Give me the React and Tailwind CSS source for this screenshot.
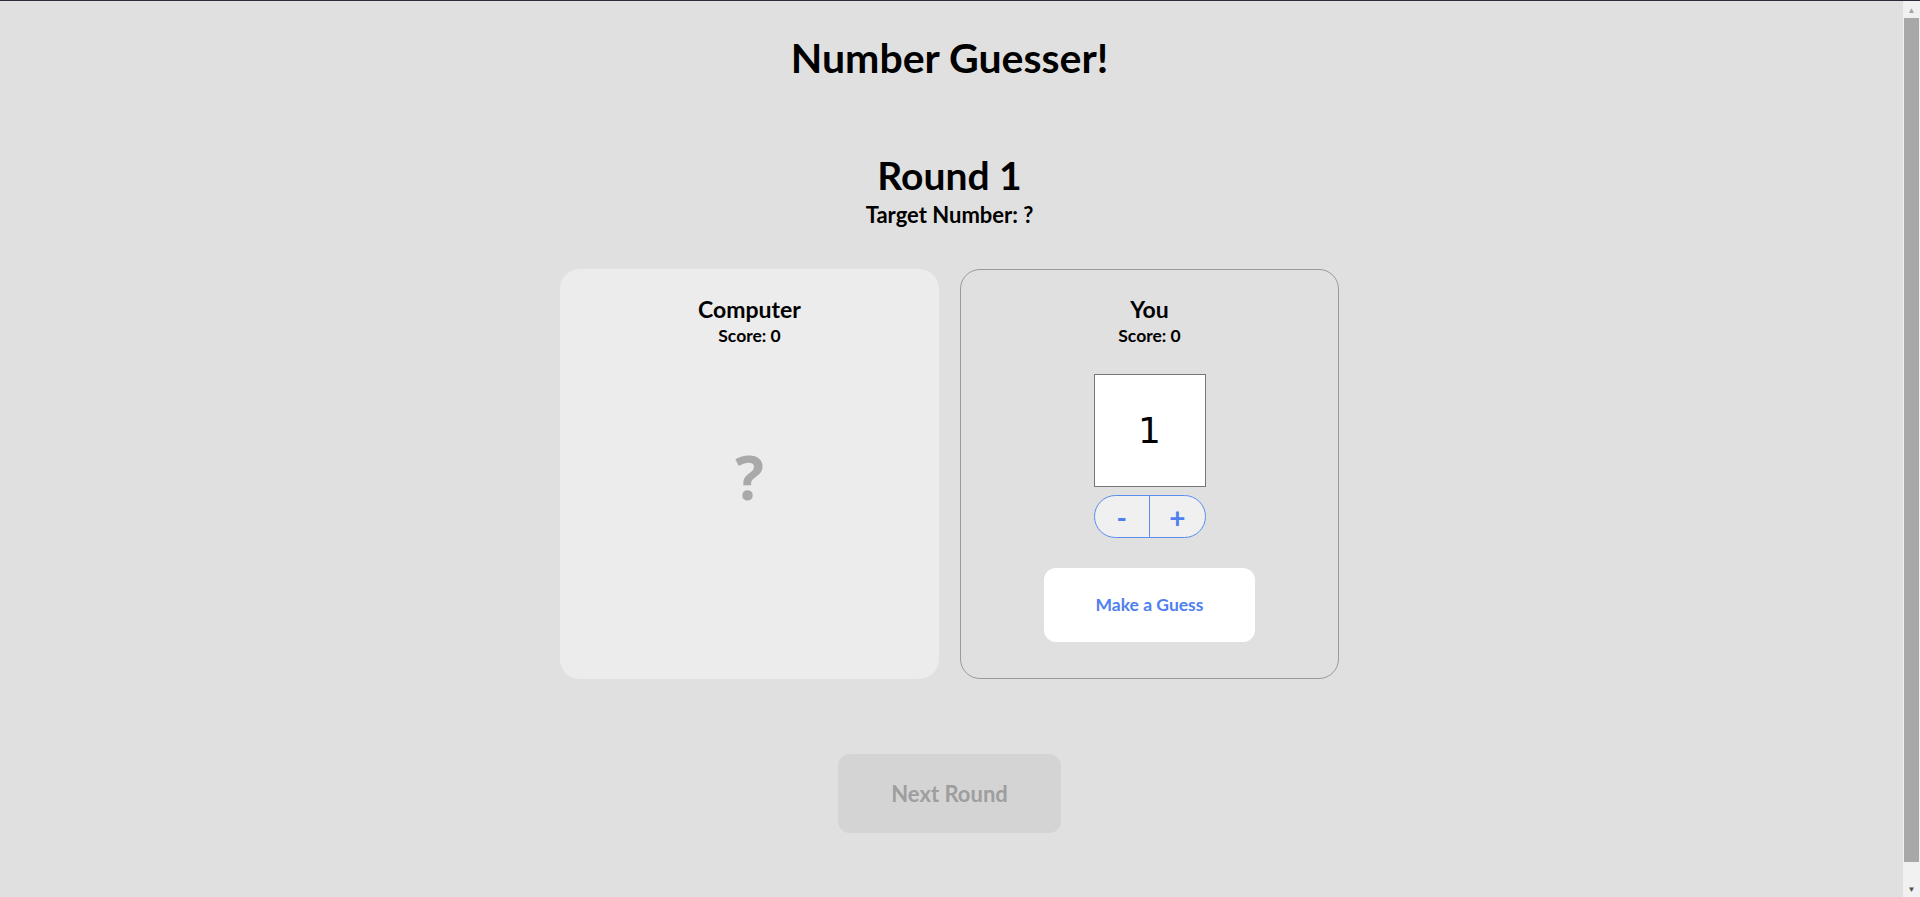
import { useState } from 'react';

export default function App() {
  const [guess, setGuess] = useState(1);

  return (
    <div className="h-[897px] flex bg-[#e0e0e0] border-t border-[#2b2b3b] overflow-hidden">
      <div className="flex-1 min-h-[920px] pr-[4px] font-['Lato',sans-serif] text-black flex flex-col items-center pb-[86px]">
        <h1 className="mt-[33px] text-[41px] leading-[48px] font-bold">Number Guesser!</h1>

        <h2 className="mt-[71px] text-[39px] leading-[44px] font-bold">Round 1</h2>
        <p className="mt-[6px] text-[22px] leading-[24px] font-bold">Target Number: ?</p>

        <div className="mt-[42px] flex gap-[21px]">
          {/* computer */}
          <div className="w-[379px] h-[410px] rounded-[20px] bg-[#ececec] flex flex-col items-center pt-[27px]">
            <h3 className="text-[23px] leading-[26px] font-bold">Computer</h3>
            <p className="mt-[4px] text-[17.5px] leading-[20px] font-bold">Score: 0</p>
            <div className="mt-[95px] text-[60px] leading-[72px] font-bold text-[#a9a9a9] font-['Open_Sans',sans-serif]">?</div>
          </div>

          {/* player */}
          <div className="w-[379px] h-[410px] rounded-[20px] border border-[#9a9a9a] flex flex-col items-center pt-[26px]">
            <h3 className="text-[23px] leading-[26px] font-bold">You</h3>
            <p className="mt-[4px] text-[17.5px] leading-[20px] font-bold">Score: 0</p>
            <div className="mt-[28px] w-[112px] h-[113px] bg-white border border-[#767676] flex items-center justify-center font-['DejaVu_Sans',sans-serif] text-[36px]">
              {guess}
            </div>
            <div className="mt-[8px] w-[112px] h-[43px] rounded-full border border-[#5b8def] bg-[#f0f0f0] flex overflow-hidden text-[#4f7ff0] font-bold text-[28px]">
              <button onClick={() => setGuess(Math.max(0, guess - 1))} className="flex-1 flex items-center justify-center border-r border-[#5b8def]">-</button>
              <button onClick={() => setGuess(Math.min(10, guess + 1))} className="flex-1 flex items-center justify-center">+</button>
            </div>
            <button className="mt-[30px] w-[211px] h-[74px] rounded-[12px] bg-white text-[17.5px] font-bold text-[#4f7ff0]">Make a Guess</button>
          </div>
        </div>

        <button disabled className="mt-[75px] w-[223px] h-[79px] rounded-[12px] bg-[#d4d4d4] text-[22px] font-bold text-[#9e9e9e]">Next Round</button>
      </div>

      {/* scrollbar */}
      <div className="w-[17px] bg-[#f1f1f1] flex flex-col items-center">
        <div className="h-[17px] flex items-center justify-center text-[8px] leading-none text-[#a3a3a3]">▲</div>
        <div className="flex-1 w-[15px] bg-[#a8a8a8] mb-[18px]" />
        <div className="h-[17px] flex items-center justify-center text-[8px] leading-none text-[#505050]">▼</div>
      </div>
    </div>
  );
}
